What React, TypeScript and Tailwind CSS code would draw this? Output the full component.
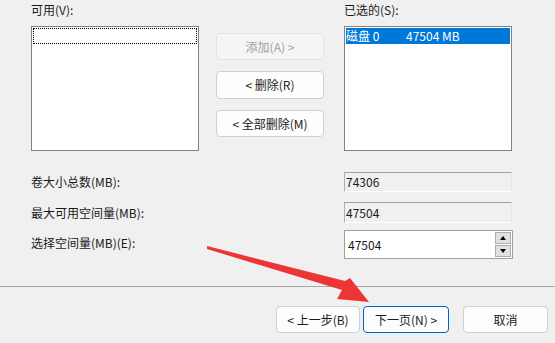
const FONT = 'font-["Microsoft_YaHei_UI","Noto_Sans_CJK_SC",sans-serif]';

const Btn = ({
  children,
  className = '',
  disabled = false,
  primary = false,
}: {
  children: React.ReactNode;
  className?: string;
  disabled?: boolean;
  primary?: boolean;
}) => (
  <button
    type="button"
    disabled={disabled}
    className={`flex items-center justify-center rounded-[4px] border text-[12px] ${
      disabled
        ? 'border-[#e3e3e3] bg-[#f5f5f5] text-[#a0a0a0]'
        : primary
          ? 'border-[#0067c0] bg-[#fdfdfd] text-[#1a1a1a]'
          : 'border-[#d0d0d0] bg-[#fdfdfd] text-[#1a1a1a]'
    } ${className}`}
  >
    {children}
  </button>
);

const Field = ({ value, className = '' }: { value: string; className?: string }) => (
  <div
    className={`flex w-[168px] items-center border border-t-[#a0a0a0] border-l-[#b0b0b0] border-r-[#e6e6e6] border-b-[#ffffff] bg-[#f0f0f0] pl-[1px] text-[12px] text-[#1a1a1a] ${className}`}
  >
    {value}
  </div>
);

export default function App() {
  return (
    <div className={`relative h-[343px] w-[555px] overflow-hidden bg-[#f0f0f0] ${FONT} text-[12px] text-[#1a1a1a]`}>
      {/* lists */}
      <div className="flex pl-[31px] pt-[2px]">
        <div className="flex w-[168px] flex-col">
          <div className="h-[24px] leading-[16px]">可用(V):</div>
          <div className="h-[125px] border border-[#828282] bg-white p-[1px]">
            <div className="h-[16px] border border-dotted border-black" />
          </div>
        </div>

        <div className="ml-[17px] flex w-[108px] flex-col gap-[11px] pt-[31px]">
          <Btn disabled className="h-[27px]">添加(A) &gt;</Btn>
          <Btn className="h-[28px]">&lt; 删除(R)</Btn>
          <Btn className="h-[27px]">&lt; 全部删除(M)</Btn>
        </div>

        <div className="ml-[20px] flex w-[168px] flex-col">
          <div className="h-[24px] leading-[16px]">已选的(S):</div>
          <div className="h-[125px] border border-[#828282] bg-white p-[1px]">
            <div className="flex h-[16px] items-center bg-[#0078d7] text-[12px] text-white">
              <span className="w-[60px]">磁盘 0</span>
              <span>47504 MB</span>
            </div>
          </div>
        </div>
      </div>

      {/* size rows */}
      <div className="mt-[21px] flex flex-col pl-[31px]">
        <div className="flex h-[20px] items-center">
          <span className="w-[313px]">卷大小总数(MB):</span>
          <Field value="74306" className="h-[20px]" />
        </div>
        <div className="mt-[10px] flex h-[21px] items-center">
          <span className="w-[313px]">最大可用空间量(MB):</span>
          <Field value="47504" className="h-[21px]" />
        </div>
        <div className="mt-[7px] flex h-[29px] items-center">
          <span className="w-[313px] pb-[4px]">选择空间量(MB)(E):</span>
          <div className="flex h-[29px] w-[169px] items-center justify-between border border-[#a0a0a0] bg-white pl-[3px] pr-[1px]">
            <span>47504</span>
            <div className="flex flex-col gap-[1px]">
              <div className="flex h-[12px] w-[16px] items-center justify-center border border-[#adadad] bg-[#e1e1e1]">
                <svg width="6" height="4" viewBox="0 0 6 4"><path d="M3 0L6 4H0Z" fill="#000" /></svg>
              </div>
              <div className="flex h-[12px] w-[16px] items-center justify-center border border-[#adadad] bg-[#e1e1e1]">
                <svg width="6" height="4" viewBox="0 0 6 4"><path d="M0 0H6L3 4Z" fill="#000" /></svg>
              </div>
            </div>
          </div>
        </div>
      </div>

      {/* footer */}
      <div className="mt-[27px] h-px w-full bg-[#a8a8a8]" />
      <div className="flex pl-[276px] pt-[19px]">
        <Btn className="h-[27px] w-[84px]">&lt; 上一步(B)</Btn>
        <Btn primary className="ml-[3px] h-[27px] w-[86px]">下一页(N) &gt;</Btn>
        <Btn className="ml-[14px] h-[27px] w-[85px]">取消</Btn>
      </div>

      {/* red annotation arrow */}
      <svg className="pointer-events-none absolute left-0 top-0" width="555" height="343" viewBox="0 0 555 343">
        <path d="M207 246 L345 281 L350 278 L369 302 L337 299 L342 290 L207 249 Z" fill="#ee3535" />
      </svg>
    </div>
  );
}
